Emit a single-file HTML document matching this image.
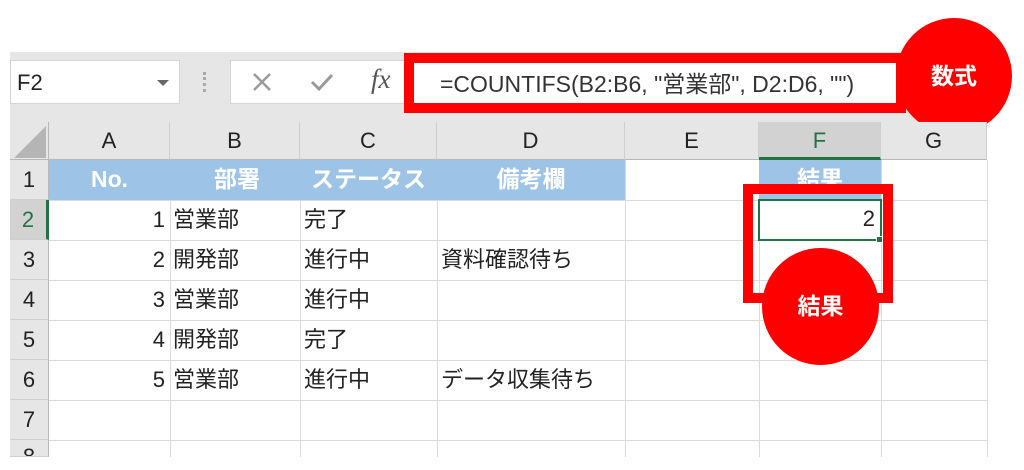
<!DOCTYPE html>
<html><head><meta charset="utf-8"><style>
*{margin:0;padding:0;box-sizing:border-box}
body{width:1024px;height:470px;background:#fff;position:relative;overflow:hidden;font-family:"Liberation Sans","Noto Sans CJK JP",sans-serif}
.a{position:absolute}
.tb{left:10px;top:52px;width:977px;height:70px;background:#e6e6e6}
.box{background:#fff;border:1px solid #d4d4d4}
.ch{top:122px;height:38px;background:#e6e6e6;border-right:1px solid #cfcfcf;border-bottom:1px solid #b8b8b8;text-align:center;font-size:22px;line-height:38px;color:#222}
.rh{left:10px;width:39px;height:40px;background:#e6e6e6;border-bottom:1px solid #cfcfcf;border-right:1px solid #b8b8b8;font-size:22px;line-height:40px;text-align:center;color:#222}
.hl{height:1px;background:#dadada;left:49px;width:938px}
.vl{width:1px;background:#dadada;top:160px;height:297px}
.c{font-size:22px;line-height:40px;color:#222;white-space:nowrap}
.hd{top:160px;height:40px;background:#9dc3e6;color:#fff;font-weight:bold;font-size:23px;line-height:38px;text-align:center}
.circ{border-radius:50%;background:#f00;color:#fff;font-weight:bold;font-size:23px;text-align:center}
</style></head><body>
<div class="a tb"></div>
<div class="a box" style="left:10px;top:60px;width:170px;height:44px;font-size:22px;line-height:44px;padding-left:6px;color:#222">F2</div>
<div class="a" style="left:157px;top:80px;width:0;height:0;border-left:6px solid transparent;border-right:6px solid transparent;border-top:6px solid #666"></div>
<div class="a" style="left:203px;top:72px;width:4px;height:20px;border-left:3px dotted #aaa"></div>
<div class="a box" style="left:230px;top:60px;width:757px;height:44px"></div>
<svg class="a" style="left:252px;top:72px" width="20" height="20"><path d="M2 2L18 18M18 2L2 18" stroke="#9a9a9a" stroke-width="2.5"/></svg>
<svg class="a" style="left:310px;top:72px" width="24" height="20"><path d="M2 10L9 17L22 3" stroke="#9a9a9a" stroke-width="3" fill="none"/></svg>
<div class="a" style="left:371px;top:64px;font-size:27px;font-style:italic;font-family:'Liberation Serif',serif;color:#555">fx</div>
<div class="a" style="left:440px;top:65px;font-size:23px;color:#333;white-space:nowrap">=COUNTIFS(B2:B6, "営業部", D2:D6, "")</div>
<div class="a" style="left:404px;top:53px;width:502px;height:60px;border:10px solid #f00"></div>
<div class="a circ" style="left:896px;top:18px;width:116px;height:116px;line-height:116px">数式</div>
<div class="a" style="left:10px;top:122px;width:39px;height:38px;background:#e6e6e6;border-right:1px solid #b8b8b8;border-bottom:1px solid #b8b8b8"></div>
<div class="a" style="left:14px;top:126px;width:0;height:0;border-left:32px solid transparent;border-bottom:32px solid #b5b5b5"></div>
<div class="a ch" style="left:49px;width:121px">A</div>
<div class="a ch" style="left:170px;width:130px">B</div>
<div class="a ch" style="left:300px;width:137px">C</div>
<div class="a ch" style="left:437px;width:188px">D</div>
<div class="a ch" style="left:625px;width:134px">E</div>
<div class="a ch" style="left:759px;width:122px;background:#d2d2d2;color:#217346;border-bottom:3px solid #217346">F</div>
<div class="a ch" style="left:881px;width:106px">G</div>
<div class="a rh" style="top:160px">1</div>
<div class="a rh" style="top:200px;background:#d2d2d2;color:#217346;border-right:3px solid #217346">2</div>
<div class="a rh" style="top:240px">3</div>
<div class="a rh" style="top:280px">4</div>
<div class="a rh" style="top:320px">5</div>
<div class="a rh" style="top:360px">6</div>
<div class="a rh" style="top:400px">7</div>
<div class="a rh" style="top:440px;height:17px;line-height:34px;overflow:hidden">8</div>
<div class="a hl" style="top:200px"></div><div class="a hl" style="top:240px"></div><div class="a hl" style="top:280px"></div><div class="a hl" style="top:320px"></div><div class="a hl" style="top:360px"></div><div class="a hl" style="top:400px"></div><div class="a hl" style="top:440px"></div>
<div class="a vl" style="left:170px"></div><div class="a vl" style="left:300px"></div><div class="a vl" style="left:437px"></div><div class="a vl" style="left:625px"></div><div class="a vl" style="left:759px"></div><div class="a vl" style="left:881px"></div><div class="a vl" style="left:987px"></div>
<div class="a hd" style="left:49px;width:121px">No.</div>
<div class="a hd" style="left:170px;width:130px;text-align:right;padding-right:40px">部署</div>
<div class="a hd" style="left:300px;width:137px">ステータス</div>
<div class="a hd" style="left:437px;width:188px">備考欄</div>
<div class="a hd" style="left:759px;width:122px">結果</div>
<div class="a c" style="left:49px;top:200px;width:116px;text-align:right">1</div>
<div class="a c" style="left:49px;top:240px;width:116px;text-align:right">2</div>
<div class="a c" style="left:49px;top:280px;width:116px;text-align:right">3</div>
<div class="a c" style="left:49px;top:320px;width:116px;text-align:right">4</div>
<div class="a c" style="left:49px;top:360px;width:116px;text-align:right">5</div>
<div class="a c" style="left:173px;top:200px">営業部</div>
<div class="a c" style="left:173px;top:240px">開発部</div>
<div class="a c" style="left:173px;top:280px">営業部</div>
<div class="a c" style="left:173px;top:320px">開発部</div>
<div class="a c" style="left:173px;top:360px">営業部</div>
<div class="a c" style="left:304px;top:200px">完了</div>
<div class="a c" style="left:304px;top:240px">進行中</div>
<div class="a c" style="left:304px;top:280px">進行中</div>
<div class="a c" style="left:304px;top:320px">完了</div>
<div class="a c" style="left:304px;top:360px">進行中</div>
<div class="a c" style="left:441px;top:240px">資料確認待ち</div>
<div class="a c" style="left:441px;top:360px">データ収集待ち</div>
<div class="a" style="left:758px;top:199px;width:124px;height:42px;border:2px solid #217346"></div>
<div class="a" style="left:876px;top:236px;width:7px;height:7px;background:#217346;border:1px solid #fff"></div>
<div class="a c" style="left:759px;top:199px;width:116px;text-align:right">2</div>
<div class="a" style="left:743px;top:184px;width:150px;height:119px;border:10px solid #f00"></div>
<div class="a circ" style="left:762px;top:248px;width:117px;height:117px;line-height:117px">結果</div>
</body></html>
